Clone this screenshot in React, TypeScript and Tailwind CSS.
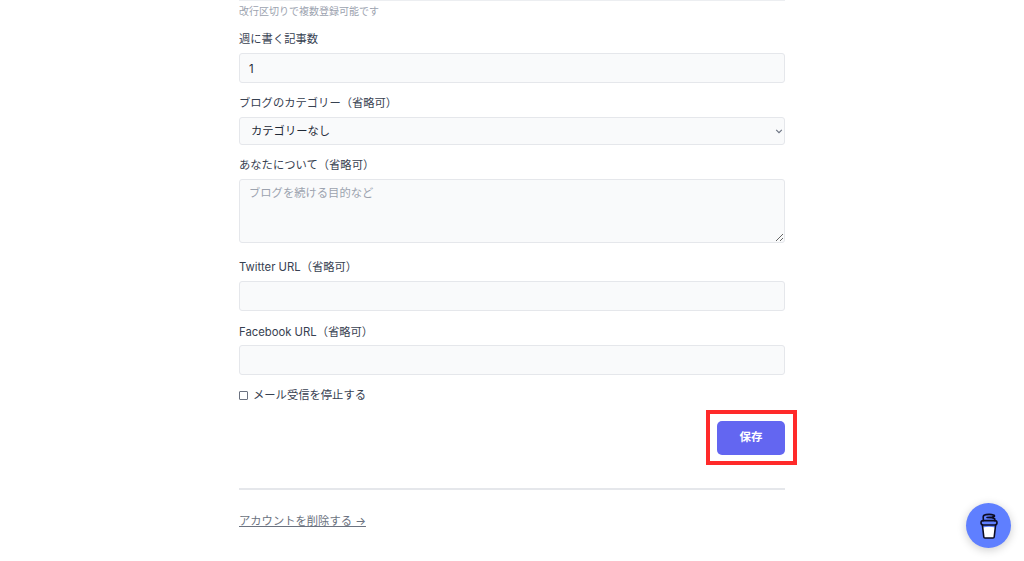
const fontStack = "font-['Inter','Noto_Sans_CJK_JP',sans-serif]";

function Label({ children }: { children: React.ReactNode }) {
  return <label className="block text-[11.3px] leading-[16px] font-normal text-[#374151]">{children}</label>;
}

const fieldClass =
  "block w-full rounded-[3px] border border-[#e5e7eb] bg-[#f9fafb] px-[9px] text-[11.3px] text-[#1f2937] outline-none";

function CoffeeCup() {
  return (
    <svg viewBox="0 0 18 26" className="h-[26px] w-[18px]" fill="none" stroke="#0d0c22" strokeWidth="1.6" strokeLinecap="round" strokeLinejoin="round">
      <path d="M2.8 14.5 Q9 13 15.2 14.5 L14.2 24 Q14.1 25 13 25 H5 Q3.9 25 3.8 24 Z" fill="#fff" stroke="none" />
      <path d="M2.4 12 L3.8 24 Q3.9 25 5 25 H13 Q14.1 25 14.2 24 L15.6 12" />
      <rect x="1" y="7.6" width="16" height="4.4" rx="2.2" />
      <path d="M3.4 7.6 L3.2 4 Q3.2 2 6 1.6 Q11 1 14 2.2 Q15.6 3.6 12 4.1 L7 4.5 Q13 4.6 14.8 5.8 L14.6 7.6" />
    </svg>
  );
}

export default function App() {
  return (
    <div className={`relative h-[561px] overflow-hidden bg-white ${fontStack}`}>
      <div className="ml-[239px] w-[546px]">
        <div className="h-px bg-[#eceef1]" />
        <p className="mt-[4px] text-[10px] leading-[13px] text-[#9ca3af]">改行区切りで複数登録可能です</p>

        <div className="mt-[13px]"><Label>週に書く記事数</Label></div>
        <input readOnly value="1" className={`${fieldClass} mt-[6px] h-[30px] pt-[2px]`} />

        <div className="mt-[12px]"><Label>ブログのカテゴリー（省略可）</Label></div>
        <div className={`${fieldClass} mt-[6px] flex h-[28px] items-center justify-between pl-[11px] pr-[1px]`}>
          <span>カテゴリーなし</span>
          <svg viewBox="0 0 10 10" className="h-[8px] w-[8px]" fill="none" stroke="#6b7280" strokeWidth="1.4">
            <path d="M1.5 3.5 L5 7 L8.5 3.5" />
          </svg>
        </div>

        <div className="mt-[12px]"><Label>あなたについて（省略可）</Label></div>
        <textarea
          readOnly
          placeholder="ブログを続ける目的など"
          className={`${fieldClass} mt-[6px] h-[64px] resize-y py-[5px] placeholder:text-[#9ca3af]`}
        />

        <div className="mt-[16px]"><Label>Twitter URL（省略可）</Label></div>
        <input readOnly className={`${fieldClass} mt-[6px] h-[30px]`} />

        <div className="mt-[13px]"><Label>Facebook URL（省略可）</Label></div>
        <input readOnly className={`${fieldClass} mt-[5px] h-[30px]`} />

        <div className="mt-[12px] flex items-center gap-[5px]">
          <span className="h-[9px] w-[9px] rounded-[1px] border border-[#6b7280] bg-white" />
          <span className="text-[11.3px] leading-[16px] text-[#374151]">メール受信を停止する</span>
        </div>

        <div className="mt-[18px] flex justify-end">
          <div className="relative">
            <button className="flex h-[34px] w-[68px] items-center justify-center rounded-[5px] bg-[#6366f1] text-[11.5px] font-bold text-white">
              保存
            </button>
            <div className="absolute -top-[11px] -right-[12px] -bottom-[10px] -left-[11px] border-4 border-[#ff2a2a]" />
          </div>
        </div>

        <div className="mt-[33px] h-[2px] bg-[#e5e7eb]" />
        <a className="mt-[23px] block w-fit text-[11.3px] leading-[16px] text-[#6b7280] underline">アカウントを削除する →</a>
      </div>

      <button className="absolute left-[966px] top-[503px] flex h-[45px] w-[45px] items-center justify-center rounded-full bg-[#5f7fff] shadow-[0_2px_10px_rgba(0,0,0,0.2)]">
        <CoffeeCup />
      </button>
    </div>
  );
}
